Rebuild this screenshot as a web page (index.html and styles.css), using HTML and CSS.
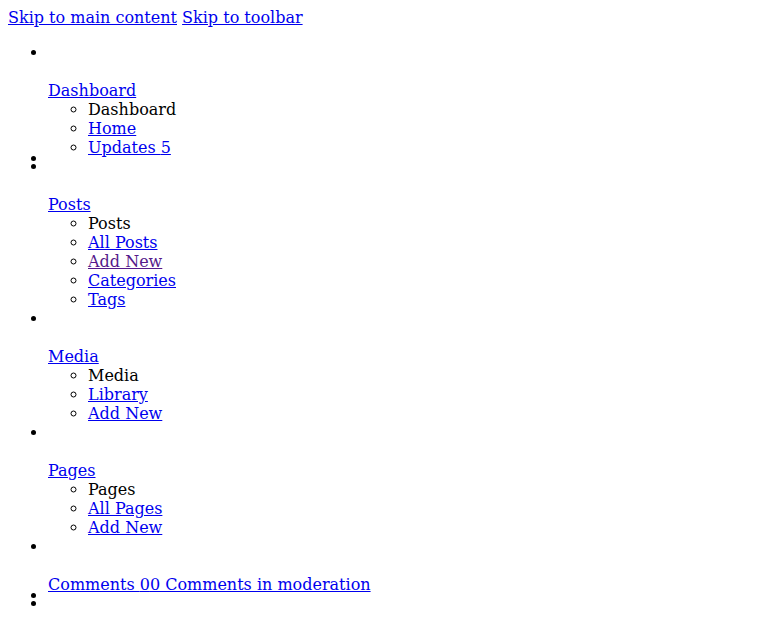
FILE: index.html
```html
<!DOCTYPE html>
<html lang="en">
<head>
<meta charset="utf-8">
<title>Dashboard</title>
<link rel="stylesheet" href="styles.css">
</head>
<body class="admin">
<a class="skip-link" href="#main">Skip to main content</a>
<a class="skip-link" href="#toolbar">Skip to toolbar</a>
<ul class="adminmenu">
  <li class="menu-top">
    <a href="#" class="menu-link"><div class="menu-arrow"><div></div></div><div class="menu-image"><br></div><div class="menu-name">Dashboard</div></a>
    <ul class="submenu">
      <li class="submenu-head">Dashboard</li>
      <li><a href="#">Home</a></li>
      <li><a href="#">Updates <span class="count"><span>5</span></span></a></li>
    </ul>
  </li>
  <li class="menu-separator"><div class="separator"></div></li>
  <li class="menu-top">
    <a href="#" class="menu-link"><div class="menu-arrow"><div></div></div><div class="menu-image"><br></div><div class="menu-name">Posts</div></a>
    <ul class="submenu">
      <li class="submenu-head">Posts</li>
      <li><a href="#">All Posts</a></li>
      <li><a href="#" class="visited">Add New</a></li>
      <li><a href="#">Categories</a></li>
      <li><a href="#">Tags</a></li>
    </ul>
  </li>
  <li class="menu-top">
    <a href="#" class="menu-link"><div class="menu-arrow"><div></div></div><div class="menu-image"><br></div><div class="menu-name">Media</div></a>
    <ul class="submenu">
      <li class="submenu-head">Media</li>
      <li><a href="#">Library</a></li>
      <li><a href="#">Add New</a></li>
    </ul>
  </li>
  <li class="menu-top">
    <a href="#" class="menu-link"><div class="menu-arrow"><div></div></div><div class="menu-image"><br></div><div class="menu-name">Pages</div></a>
    <ul class="submenu">
      <li class="submenu-head">Pages</li>
      <li><a href="#">All Pages</a></li>
      <li><a href="#">Add New</a></li>
    </ul>
  </li>
  <li class="menu-top">
    <a href="#" class="menu-link"><div class="menu-arrow"><div></div></div><div class="menu-image"><br></div><div class="menu-name">Comments <span class="count"><span>0</span><span>0 Comments in moderation</span></span></div></a>
  </li>
  <li class="menu-separator"><div class="separator"></div></li>
  <li class="menu-top">
    <a href="#" class="menu-link"><div class="menu-arrow"><div></div></div><div class="menu-image"><br></div><div class="menu-name">Appearance</div></a>
    <ul class="submenu">
      <li class="submenu-head">Appearance</li>
      <li><a href="#">Themes</a></li>
      <li><a href="#">Customize</a></li>
    </ul>
  </li>
</ul>
</body>
</html>
```
FILE: styles.css
```css
body.admin {
  font-family: "DejaVu Serif", serif;
  color: #000;
}

a {
  color: #0000ee;
}

a.visited {
  color: #551a8b;
}

/* the marker sits on a line of its own above the (empty) icon line */
.menu-arrow::before {
  content: "\200b";
}

/* separator items take no height; their bullet overlaps the next one */
.menu-separator {
  height: 0;
  line-height: 4px;
  margin-bottom: -4px;
}
```
